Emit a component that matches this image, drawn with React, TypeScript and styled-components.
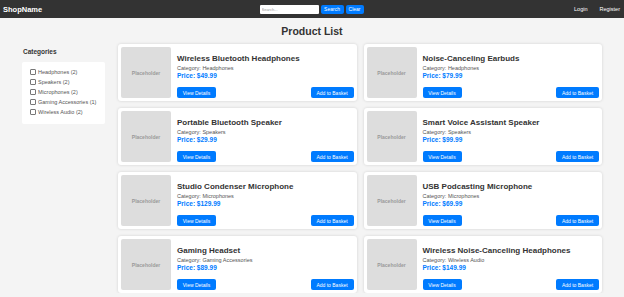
import React from "react";
import styled, { createGlobalStyle } from "styled-components";

const GlobalStyle = createGlobalStyle`
  body {
    margin: 0;
    background: #f4f4f4;
    font-family: "Liberation Sans", Arial, sans-serif;
    color: #333;
  }
`;

type Product = {
  name: string;
  category: string;
  price: string;
};

const products: Product[] = [
  { name: "Wireless Bluetooth Headphones", category: "Headphones", price: "49.99" },
  { name: "Noise-Canceling Earbuds", category: "Headphones", price: "79.99" },
  { name: "Portable Bluetooth Speaker", category: "Speakers", price: "29.99" },
  { name: "Smart Voice Assistant Speaker", category: "Speakers", price: "99.99" },
  { name: "Studio Condenser Microphone", category: "Microphones", price: "129.99" },
  { name: "USB Podcasting Microphone", category: "Microphones", price: "69.99" },
  { name: "Gaming Headset", category: "Gaming Accessories", price: "89.99" },
  { name: "Wireless Noise-Canceling Headphones", category: "Wireless Audio", price: "149.99" },
];

const categories = [
  "Headphones (2)",
  "Speakers (2)",
  "Microphones (2)",
  "Gaming Accessories (1)",
  "Wireless Audio (2)",
];

const Header = styled.header`
  height: 18px;
  background: #333;
  display: grid;
  grid-template-columns: 1fr auto 1fr;
  align-items: center;
  padding: 0 4px 0 3px;
  color: #fff;
`;

const Logo = styled.div`
  font-size: 7.5px;
  font-weight: bold;
`;

const SearchBar = styled.form`
  display: flex;
  align-items: center;
  gap: 2px;
`;

const SearchInput = styled.input`
  width: 59px;
  height: 9px;
  box-sizing: border-box;
  border: none;
  border-radius: 1px;
  padding: 0 2px;
  font-size: 4px;
  font-family: inherit;
  &::placeholder {
    color: #999;
  }
`;

const Button = styled.button<{ $wide?: number }>`
  height: ${(p) => (p.$wide ? 11 : 9)}px;
  min-width: ${(p) => p.$wide ?? 18}px;
  padding: 0 3px;
  border: none;
  border-radius: 2px;
  background: #007bff;
  color: #fff;
  font-family: inherit;
  font-size: 5px;
  cursor: pointer;
`;

const Nav = styled.nav`
  justify-self: end;
  display: flex;
  gap: 12px;
  font-size: 5.5px;
`;

const Title = styled.h1`
  margin: 7px 0 6px;
  text-align: center;
  font-size: 10.5px;
  line-height: 13px;
`;

const Main = styled.main`
  display: flex;
  gap: 13px;
  padding: 0 22px;
`;

const Sidebar = styled.aside`
  width: 83px;
  flex-shrink: 0;
`;

const SidebarTitle = styled.h2`
  font-size: 6.5px;
  margin: 4px 0 6px 1px;
  line-height: 8px;
`;

const CategoryBox = styled.div`
  background: #fff;
  border-radius: 2px;
  padding: 5px 4px 7px 8px;
`;

const CategoryItem = styled.label`
  display: flex;
  align-items: center;
  gap: 2px;
  font-size: 5.5px;
  line-height: 10px;
  color: #555;
  white-space: nowrap;
`;

const Checkbox = styled.span`
  width: 4px;
  height: 4px;
  border: 0.5px solid #777;
  border-radius: 1px;
  background: #fff;
`;

const Grid = styled.section`
  flex: 1;
  display: grid;
  grid-template-columns: 1fr 1fr;
  gap: 7px;
`;

const Card = styled.article`
  height: 57px;
  box-sizing: border-box;
  background: #fff;
  border-radius: 3px;
  box-shadow: 0 0 3px rgba(0, 0, 0, 0.15);
  padding: 3px;
  display: flex;
  gap: 6px;
`;

const Placeholder = styled.div`
  width: 50px;
  height: 51px;
  flex-shrink: 0;
  background: #ddd;
  border-radius: 2px;
  display: flex;
  align-items: center;
  justify-content: center;
  color: #999;
  font-size: 5px;
  font-weight: bold;
`;

const Info = styled.div`
  flex: 1;
  display: flex;
  flex-direction: column;
  padding-top: 6px;
`;

const Name = styled.h3`
  margin: 0 0 1px;
  font-size: 8px;
  line-height: 11px;
  color: #333;
`;

const Category = styled.p`
  margin: 0;
  font-size: 5.5px;
  line-height: 7px;
  color: #555;
`;

const Price = styled.p`
  margin: 0;
  font-size: 6.5px;
  line-height: 8px;
  font-weight: bold;
  color: #007bff;
`;

const Actions = styled.div`
  margin-top: auto;
  display: flex;
  justify-content: space-between;
`;

const ProductCard: React.FC<{ product: Product }> = ({ product }) => (
  <Card>
    <Placeholder>Placeholder</Placeholder>
    <Info>
      <Name>{product.name}</Name>
      <Category>Category: {product.category}</Category>
      <Price>Price: ${product.price}</Price>
      <Actions>
        <Button $wide={39}>View Details</Button>
        <Button $wide={43}>Add to Basket</Button>
      </Actions>
    </Info>
  </Card>
);

const App: React.FC = () => {
  return (
    <>
      <GlobalStyle />
      <Header>
        <Logo>ShopName</Logo>
        <SearchBar onSubmit={(e) => e.preventDefault()}>
          <SearchInput placeholder="Search..." />
          <Button type="submit" style={{ minWidth: 23 }}>
            Search
          </Button>
          <Button type="button">Clear</Button>
        </SearchBar>
        <Nav>
          <span>Login</span>
          <span>Register</span>
        </Nav>
      </Header>
      <Title>Product List</Title>
      <Main>
        <Sidebar>
          <SidebarTitle>Categories</SidebarTitle>
          <CategoryBox>
            {categories.map((c) => (
              <CategoryItem key={c}>
                <Checkbox />
                {c}
              </CategoryItem>
            ))}
          </CategoryBox>
        </Sidebar>
        <Grid>
          {products.map((p) => (
            <ProductCard key={p.name} product={p} />
          ))}
        </Grid>
      </Main>
    </>
  );
};

export default App;
